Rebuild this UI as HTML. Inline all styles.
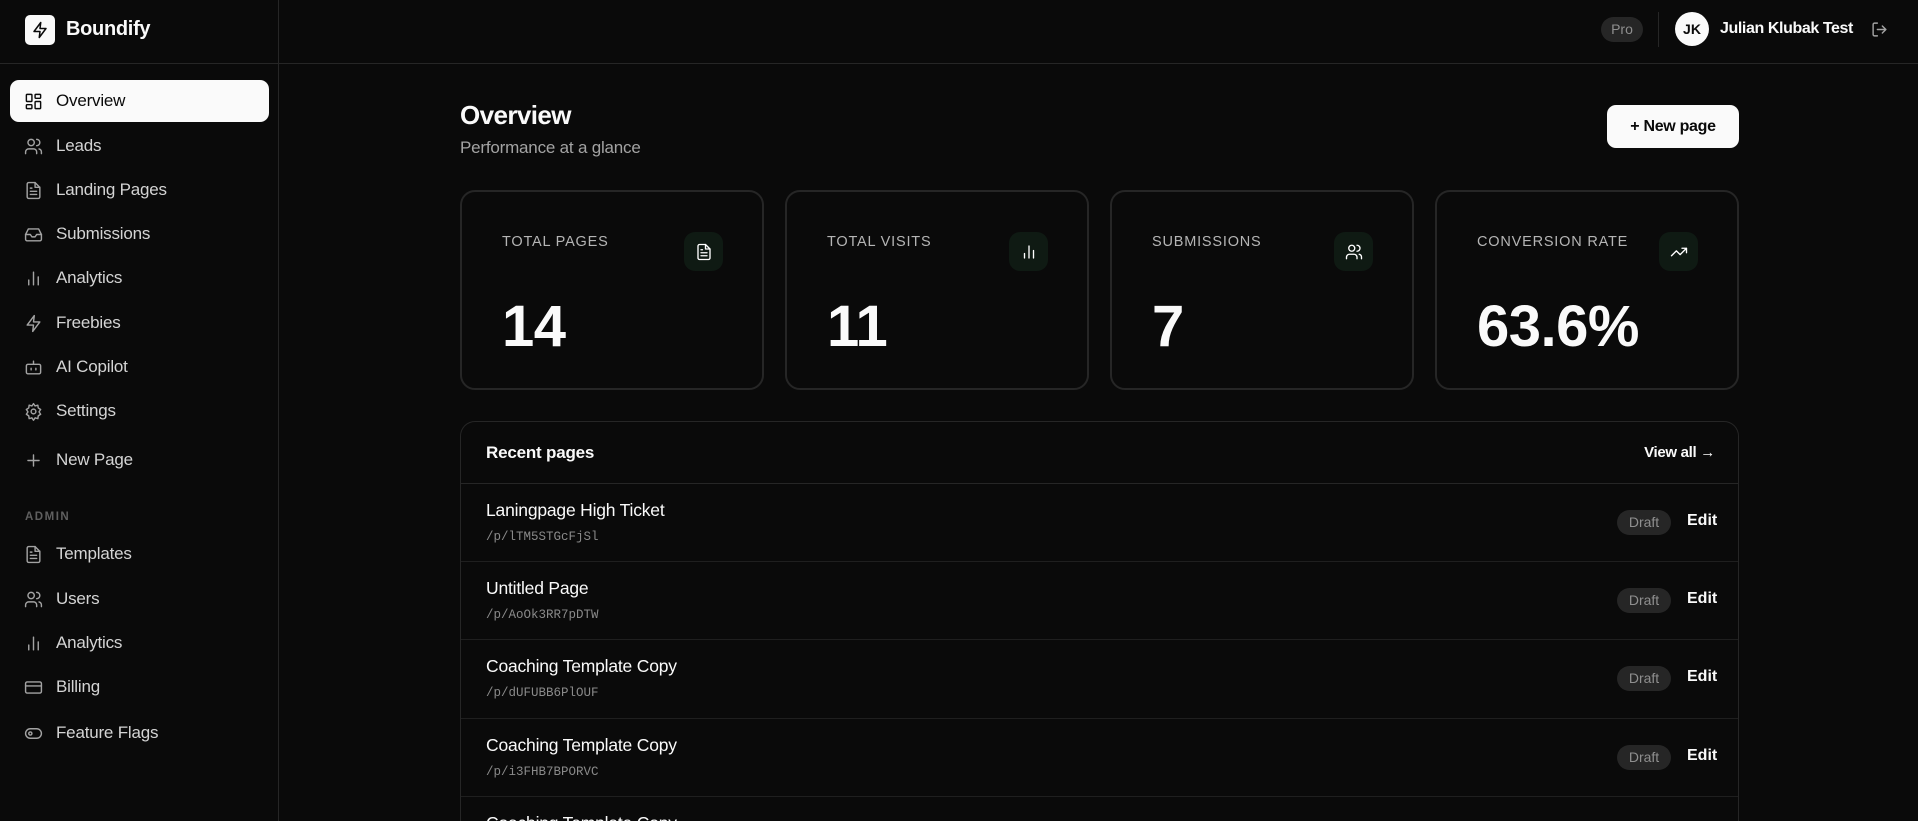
<!DOCTYPE html>
<html><head><meta charset="utf-8"><style>
*{box-sizing:border-box;margin:0;padding:0}
html{height:821px;overflow:hidden}
body{width:1918px;height:821px;overflow:hidden;background:#0a0a0a;font-family:"Liberation Sans",sans-serif;color:#fafafa;position:relative}
.abs{position:absolute}
.side{left:0;top:0;width:279px;height:821px;border-right:1px solid #262626}
.hdr{left:0;top:63px;width:1918px;height:1px;background:#262626}
.nav{position:absolute;left:10px;width:259px;height:42px;display:flex;align-items:center;padding-left:14px;font-size:17px;color:#d4d4d4;border-radius:9px;letter-spacing:-0.2px}
.nav svg{width:19px;height:19px;margin-right:13px;fill:none;stroke:#a3a3a3;stroke-width:1.8;stroke-linecap:round;stroke-linejoin:round}
.nav.act{background:#fafafa;color:#0a0a0a}
.nav.act svg{stroke:#0a0a0a}
.card{position:absolute;top:190px;width:304px;height:200px;border:2px solid #262626;border-radius:15px}
.card .lb{position:absolute;left:40px;top:42px;font-size:14.5px;letter-spacing:0.8px;color:#b5b5b5}
.card .ic{position:absolute;left:222px;top:40px;width:39px;height:39px;border-radius:11px;background:#0f1a13;display:flex;align-items:center;justify-content:center}
.card .ic svg{width:18px;height:18px;fill:none;stroke:#fff;stroke-width:1.8;stroke-linecap:round;stroke-linejoin:round}
.card .n{position:absolute;left:40px;top:101px;font-size:58px;font-weight:bold;letter-spacing:-0.5px}
.row{position:absolute;left:0;width:1279px;height:78px;border-top:1px solid #1f1f1f}
.row .t{position:absolute;left:25px;top:16px;font-size:17.5px;color:#fafafa;letter-spacing:-0.2px}
.row .c{position:absolute;left:25px;top:46px;font-family:"Liberation Mono",monospace;font-size:12.5px;color:#8a8a8a}
.row .d{position:absolute;left:1156px;top:26px;width:54px;height:25px;border-radius:13px;background:#262626;color:#8f8f8f;font-size:14px;text-align:center;line-height:25px}
.row .e{position:absolute;left:1226px;top:28px;font-size:16px;font-weight:bold}
</style></head><body>
<div class="abs side"></div>
<div class="abs hdr"></div>
<div class="abs" style="left:25px;top:15px;width:30px;height:30px;background:#fafafa;border-radius:5px;display:flex;align-items:center;justify-content:center"><svg width="18" height="18" viewBox="0 0 24 24" fill="none" stroke="#0a0a0a" stroke-width="2" stroke-linejoin="round"><path d="M13 2 4 14h8l-1 8 9-12h-8z"/></svg></div>
<div class="abs" style="left:66px;top:18px;font-size:20px;font-weight:bold;letter-spacing:-0.3px">Boundify</div>

<div class="nav act" style="top:80px"><svg viewBox="0 0 24 24"><rect x="3" y="3" width="7" height="9" rx="1"/><rect x="14" y="3" width="7" height="5" rx="1"/><rect x="14" y="12" width="7" height="9" rx="1"/><rect x="3" y="16" width="7" height="5" rx="1"/></svg>Overview</div>
<div class="nav" style="top:125px"><svg viewBox="0 0 24 24"><circle cx="9" cy="7" r="4"/><path d="M2 21v-2a4 4 0 0 1 4-4h6a4 4 0 0 1 4 4v2M16 3a4 4 0 0 1 0 8M22 21v-2a4 4 0 0 0-3-3.9"/></svg>Leads</div>
<div class="nav" style="top:169px"><svg viewBox="0 0 24 24"><path d="M14 2H6a2 2 0 0 0-2 2v16a2 2 0 0 0 2 2h12a2 2 0 0 0 2-2V8z"/><path d="M14 2v6h6M8 13h8M8 17h8M8 9h2"/></svg>Landing Pages</div>
<div class="nav" style="top:213px"><svg viewBox="0 0 24 24"><path d="M22 12h-6l-2 3h-4l-2-3H2"/><path d="M5.5 5h13L22 12v6a2 2 0 0 1-2 2H4a2 2 0 0 1-2-2v-6z"/></svg>Submissions</div>
<div class="nav" style="top:257px"><svg viewBox="0 0 24 24"><path d="M6 20v-6M12 20V4M18 20v-10"/></svg>Analytics</div>
<div class="nav" style="top:302px"><svg viewBox="0 0 24 24"><path d="M13 2 4 14h8l-1 8 9-12h-8z"/></svg>Freebies</div>
<div class="nav" style="top:346px"><svg viewBox="0 0 24 24"><rect x="3" y="8" width="18" height="12" rx="2"/><path d="M12 8V4M9 13v2M15 13v2"/></svg>AI Copilot</div>
<div class="nav" style="top:390px"><svg viewBox="0 0 24 24"><circle cx="12" cy="12" r="3"/><path d="M12 2l2 3 3.5-1 .5 3.5 3 2-2 3 2 3-3 2-.5 3.5-3.5-1-2 3-2-3-3.5 1-.5-3.5-3-2 2-3-2-3 3-2 .5-3.5 3.5 1z"/></svg>Settings</div>
<div class="nav" style="top:439px"><svg viewBox="0 0 24 24"><path d="M12 5v14M5 12h14"/></svg>New Page</div>
<div class="abs" style="left:25px;top:511px;font-size:11.5px;font-weight:bold;letter-spacing:1.5px;color:#5f5f5f">ADMIN</div>
<div class="nav" style="top:533px"><svg viewBox="0 0 24 24"><path d="M14 2H6a2 2 0 0 0-2 2v16a2 2 0 0 0 2 2h12a2 2 0 0 0 2-2V8z"/><path d="M14 2v6h6M8 13h8M8 17h8M8 9h2"/></svg>Templates</div>
<div class="nav" style="top:578px"><svg viewBox="0 0 24 24"><circle cx="9" cy="7" r="4"/><path d="M2 21v-2a4 4 0 0 1 4-4h6a4 4 0 0 1 4 4v2M16 3a4 4 0 0 1 0 8M22 21v-2a4 4 0 0 0-3-3.9"/></svg>Users</div>
<div class="nav" style="top:622px"><svg viewBox="0 0 24 24"><path d="M6 20v-6M12 20V4M18 20v-10"/></svg>Analytics</div>
<div class="nav" style="top:666px"><svg viewBox="0 0 24 24"><rect x="2" y="5" width="20" height="14" rx="2"/><path d="M2 10h20"/></svg>Billing</div>
<div class="nav" style="top:712px"><svg viewBox="0 0 24 24"><rect x="2" y="6" width="20" height="12" rx="6"/><circle cx="8" cy="12" r="2"/></svg>Feature Flags</div>

<div class="abs" style="left:1601px;top:17px;width:42px;height:25px;border-radius:13px;background:#262626;color:#8f8f8f;font-size:14px;text-align:center;line-height:25px">Pro</div>
<div class="abs" style="left:1658px;top:12px;width:1px;height:35px;background:#262626"></div>
<div class="abs" style="left:1675px;top:12px;width:34px;height:34px;border-radius:50%;background:#fafafa;color:#0a0a0a;font-size:14px;font-weight:bold;text-align:center;line-height:34px">JK</div>
<div class="abs" style="left:1720px;top:20px;font-size:16px;font-weight:bold;letter-spacing:-0.4px">Julian Klubak Test</div>
<svg class="abs" style="left:1871px;top:21px" width="17" height="17" viewBox="0 0 24 24" fill="none" stroke="#a3a3a3" stroke-width="2" stroke-linecap="round" stroke-linejoin="round"><path d="M9 21H5a2 2 0 0 1-2-2V5a2 2 0 0 1 2-2h4M16 17l5-5-5-5M21 12H9"/></svg>

<div class="abs" style="left:460px;top:100px;font-size:26px;font-weight:bold;letter-spacing:-0.6px">Overview</div>
<div class="abs" style="left:460px;top:138px;font-size:17px;color:#a3a3a3;letter-spacing:-0.2px">Performance at a glance</div>
<div class="abs" style="left:1607px;top:105px;width:132px;height:43px;border-radius:9px;background:#fafafa;color:#0a0a0a;font-size:16px;font-weight:bold;text-align:center;line-height:43px;letter-spacing:-0.3px">+ New page</div>

<div class="card" style="left:460px"><div class="lb">TOTAL PAGES</div><div class="ic"><svg viewBox="0 0 24 24"><path d="M14 2H6a2 2 0 0 0-2 2v16a2 2 0 0 0 2 2h12a2 2 0 0 0 2-2V8z"/><path d="M14 2v6h6M8 13h8M8 17h8M8 9h2"/></svg></div><div class="n">14</div></div>
<div class="card" style="left:785px"><div class="lb">TOTAL VISITS</div><div class="ic"><svg viewBox="0 0 24 24"><path d="M6 20v-6M12 20V4M18 20v-10"/></svg></div><div class="n">11</div></div>
<div class="card" style="left:1110px"><div class="lb">SUBMISSIONS</div><div class="ic"><svg viewBox="0 0 24 24"><circle cx="9" cy="7" r="4"/><path d="M2 21v-2a4 4 0 0 1 4-4h6a4 4 0 0 1 4 4v2M16 3a4 4 0 0 1 0 8M22 21v-2a4 4 0 0 0-3-3.9"/></svg></div><div class="n">7</div></div>
<div class="card" style="left:1435px"><div class="lb">CONVERSION RATE</div><div class="ic"><svg viewBox="0 0 24 24"><path d="M22 7l-8.5 8.5-5-5L2 17M16 7h6v6"/></svg></div><div class="n">63.6%</div></div>

<div class="abs" style="left:460px;top:421px;width:1279px;height:400px;border:1px solid #262626;border-bottom:none;border-radius:15px 15px 0 0;overflow:hidden">
 <div class="abs" style="left:25px;top:21px;font-size:17px;font-weight:bold;letter-spacing:-0.2px">Recent pages</div>
 <div class="abs" style="right:23px;top:22px;font-size:15px;font-weight:bold;letter-spacing:-0.3px">View all →</div>
 <div class="row" style="top:61px;border-top-color:#262626"><div class="t">Laningpage High Ticket</div><div class="c">/p/lTM5STGcFjSl</div><div class="d">Draft</div><div class="e">Edit</div></div>
 <div class="row" style="top:139px"><div class="t">Untitled Page</div><div class="c">/p/AoOk3RR7pDTW</div><div class="d">Draft</div><div class="e">Edit</div></div>
 <div class="row" style="top:217px"><div class="t">Coaching Template Copy</div><div class="c">/p/dUFUBB6PlOUF</div><div class="d">Draft</div><div class="e">Edit</div></div>
 <div class="row" style="top:296px"><div class="t">Coaching Template Copy</div><div class="c">/p/i3FHB7BPORVC</div><div class="d">Draft</div><div class="e">Edit</div></div>
 <div class="row" style="top:374px"><div class="t">Coaching Template Copy</div></div>
</div>
</body></html>
